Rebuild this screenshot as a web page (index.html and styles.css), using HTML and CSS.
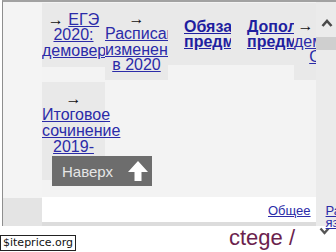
FILE: index.html
```html
<!DOCTYPE html>
<html lang="ru">
<head>
    <meta charset="UTF-8">
    <meta name="viewport" content="width=device-width, initial-scale=1.0">
    <title>ctege</title>
    <link rel="stylesheet" href="styles.css">
</head>
<body>
    <div class="frame">
        <div class="left-col">
            <div class="left-top"></div>
            <div class="left-bottom"></div>
        </div>

        <div class="main">
            <div class="menu">
                <div class="row">
                    <div class="cell cell-short"><div class="cell-in">→ <a href="#">ЕГЭ 2020: демоверсии</a></div></div>
                    <div class="cell cell-mid"><div class="cell-in">→ <a href="#">Расписание изменения в 2020</a></div></div>
                    <div class="cell cell-bold"><div class="cell-in"><a href="#">Обязательные предметы</a></div></div>
                    <div class="cell cell-bold"><div class="cell-in"><a href="#">Дополнительные предметы</a></div></div>
                    <div class="cell cell-mid"><div class="cell-in">→ <a href="#">2020 демоверсии ОГЭ</a></div></div>
                </div>
                <div class="row">
                    <div class="cell cell-tall"><div class="cell-in">→ <a href="#">Итоговое сочинение 2019-2020</a></div></div>
                </div>
            </div>
            <div class="foot">
                <a href="#" class="foot-link">Общее</a>
                <a href="#" class="foot-link more">Разделы языки</a>
            </div>
        </div>

        <div class="side">
            <svg class="chev-up" width="12" height="8" viewBox="0 0 12 8"><polyline points="1.5,7 6,2 10.5,7" fill="none" stroke="#4a4a4a" stroke-width="2.6"/></svg>
            <div class="thumb"></div>
            <div class="side-fill"></div>
            <svg class="chev-down" width="11" height="8" viewBox="0 0 11 8"><polyline points="1.5,1.5 5.5,6 9.5,1.5" fill="none" stroke="#555" stroke-width="2.4"/></svg>
        </div>
    </div>

    <div class="brand">ctege /</div>

    <a href="#" class="totop">
        Наверх
        <svg width="20" height="20" viewBox="0 0 20 20"><path d="M10 0 L20 11 H13.5 V20 H6.5 V11 H0 Z" fill="#fff"/></svg>
    </a>

    <div class="siteprice">$iteprice.org</div>
</body>
</html>
```

FILE: styles.css
```css
html, body {
    margin: 0;
    overflow: hidden;
}
body {
    font-family: "Liberation Sans", Arial, sans-serif;
    background: #fff;
    color: #111;
    width: 336px;
    height: 252px;
    position: relative;
}
a {
    color: #2b2ba8;
    text-decoration: underline;
}
.frame {
    display: grid;
    grid-template-columns: 39px 274px 20px;
    margin-left: 2px;
    border-left: 1px solid #8e8e8e;
    border-top: 2px solid #a2a2a2;
}
.left-col {
    display: flex;
    flex-direction: column;
    background: #f4f4f4;
}
.left-top {
    flex: 1;
}
.left-bottom {
    height: 28px;
    background: #e4e4e4;
}
.main {
    display: flex;
    flex-direction: column;
    min-width: 0;
}
.menu {
    height: 194px;
    padding-top: 1px;
    background: #f3f3f3;
    overflow: hidden;
}
.row {
    display: flex;
    align-items: flex-start;
}
.row + .row {
    margin-top: 2px;
}
/* cells paint one over another, so a long word runs under the next cell */
.cell {
    flex: none;
    width: 63px;
    box-sizing: border-box;
    display: flex;
    flex-direction: column;
    justify-content: center;
    background: #e9e9e9;
    text-align: center;
    font-size: 16px;
    line-height: 15.5px;
}
.cell-short {
    height: 64px;
}
.cell-mid {
    height: 77px;
}
.cell-bold {
    height: 62px;
    padding: 0 16px;
}
.cell-bold a {
    font-weight: bold;
    color: #1f1fa0;
}
.cell-tall {
    height: 98px;
    line-height: 16px;
}
.foot {
    height: 29px;
    box-sizing: border-box;
    display: flex;
    gap: 15px;
    padding: 8px 0 0 226px;
    background: #fff;
    border-bottom: 4px solid #dcdcdc;
    font-size: 13px;
    line-height: 12px;
}
.foot-link {
    flex: none;
}
.more {
    width: 10px;
    position: relative;
}
.side {
    display: flex;
    flex-direction: column;
    align-items: center;
    background: #ebebeb;
}
.chev-up {
    margin-top: 17px;
    margin-left: 2px;
}
.thumb {
    width: 20px;
    height: 13px;
    margin-top: 10px;
    background: #cfcfcf;
}
.side-fill {
    flex: 1;
}
.chev-down {
    margin-bottom: -9px;
    margin-right: 4px;
}
.brand {
    margin-top: 1px;
    padding-left: 229px;
    font-size: 22px;
    line-height: 22px;
    color: #6b1f4e;
}
.totop {
    position: absolute;
    left: 52px;
    top: 156px;
    width: 100px;
    height: 30px;
    box-sizing: border-box;
    display: flex;
    align-items: center;
    justify-content: space-between;
    padding: 0 4px 0 10px;
    background: #6d6d6d;
    color: #e6e6e6;
    font-size: 15px;
    text-decoration: none;
}
.siteprice {
    position: absolute;
    left: 0;
    bottom: 1px;
    padding: 0 2px;
    border: 1px solid #222;
    background: #fff;
    color: #111;
    font-family: "DejaVu Sans", sans-serif;
    font-size: 11px;
    line-height: 14px;
}
```
